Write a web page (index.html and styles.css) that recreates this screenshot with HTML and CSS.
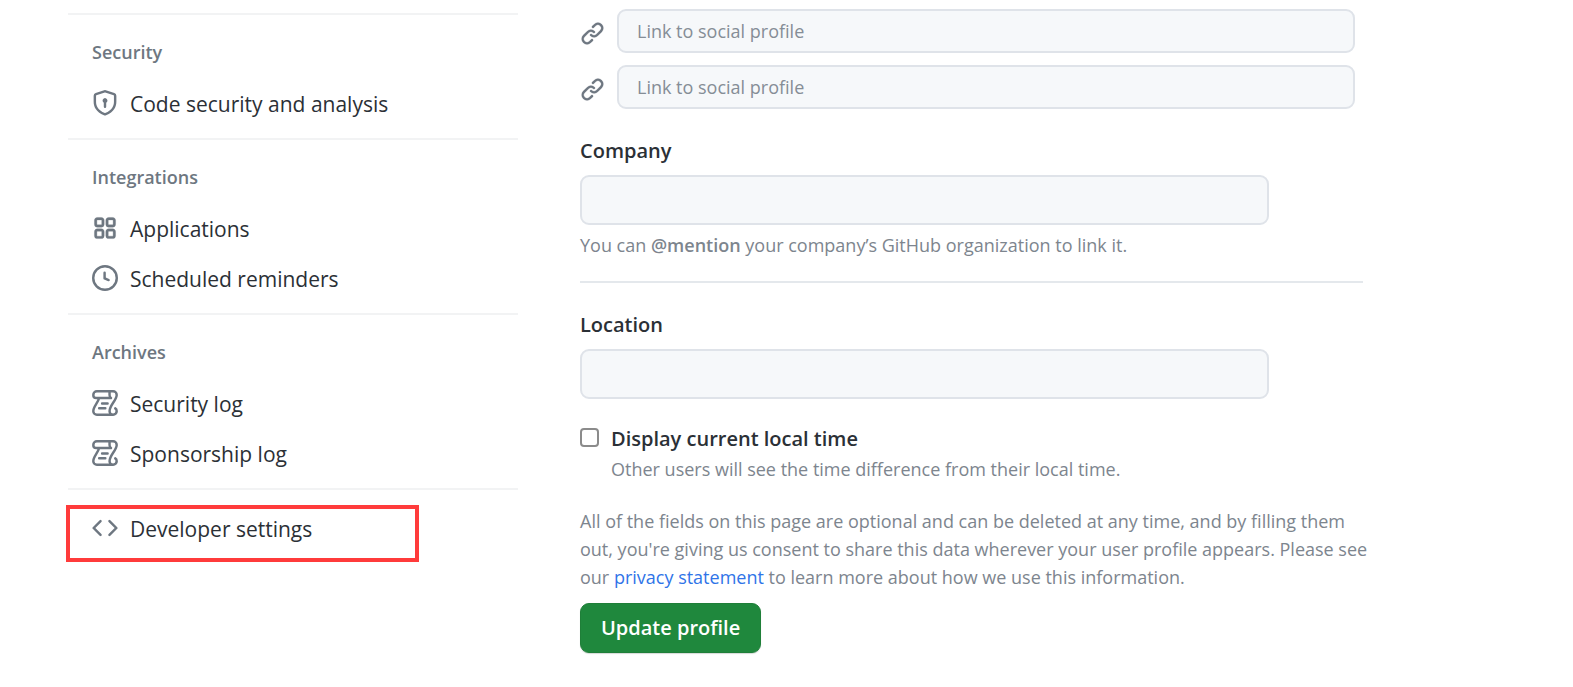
FILE: index.html
```html
<!DOCTYPE html>
<html lang="en">
<head>
<meta charset="utf-8">
<meta name="viewport" content="width=device-width, initial-scale=1">
<title>Your profile</title>
<link rel="stylesheet" href="styles.css">
</head>
<body>
<svg class="sprite" aria-hidden="true">
  <symbol id="shield" viewBox="0 0 16 16"><path d="m8.533.133 5.25 1.68A1.75 1.75 0 0 1 15 3.48V7c0 1.566-.32 3.182-1.303 4.682-.983 1.498-2.585 2.813-5.032 3.855a1.697 1.697 0 0 1-1.33 0c-2.447-1.042-4.049-2.357-5.032-3.855C1.32 10.182 1 8.566 1 7V3.48a1.75 1.75 0 0 1 1.217-1.667l5.25-1.68a1.748 1.748 0 0 1 1.066 0Zm-.61 1.429.001.001-5.25 1.68a.251.251 0 0 0-.174.237V7c0 1.36.275 2.666 1.057 3.859.784 1.194 2.121 2.342 4.366 3.298a.196.196 0 0 0 .154 0c2.245-.957 3.582-2.103 4.366-3.297C13.225 9.666 13.5 8.358 13.5 7V3.48a.25.25 0 0 0-.174-.238l-5.25-1.68a.25.25 0 0 0-.153 0ZM9.5 6.5c0 .536-.286 1.032-.75 1.3v2.45a.75.75 0 0 1-1.5 0V7.8A1.5 1.5 0 1 1 9.5 6.5Z"/></symbol>
  <symbol id="apps" viewBox="0 0 16 16"><path stroke="#6e7781" stroke-width=".2" d="M1.5 3.25c0-.966.784-1.75 1.75-1.75h2.5c.966 0 1.75.784 1.75 1.75v2.5A1.75 1.75 0 0 1 5.75 7.5h-2.5A1.75 1.75 0 0 1 1.5 5.75Zm7 0c0-.966.784-1.75 1.75-1.75h2.5c.966 0 1.75.784 1.75 1.75v2.5a1.75 1.75 0 0 1-1.75 1.75h-2.5A1.75 1.75 0 0 1 8.5 5.75Zm-7 7c0-.966.784-1.75 1.75-1.75h2.5c.966 0 1.75.784 1.75 1.75v2.5a1.75 1.75 0 0 1-1.75 1.75h-2.5a1.75 1.75 0 0 1-1.75-1.75Zm7 0c0-.966.784-1.75 1.75-1.75h2.5c.966 0 1.75.784 1.75 1.75v2.5a1.75 1.75 0 0 1-1.75 1.75h-2.5a1.75 1.75 0 0 1-1.75-1.75ZM3.25 3a.25.25 0 0 0-.25.25v2.5c0 .138.112.25.25.25h2.5A.25.25 0 0 0 6 5.75v-2.5A.25.25 0 0 0 5.75 3Zm7 0a.25.25 0 0 0-.25.25v2.5c0 .138.112.25.25.25h2.5a.25.25 0 0 0 .25-.25v-2.5a.25.25 0 0 0-.25-.25Zm-7 7a.25.25 0 0 0-.25.25v2.5c0 .138.112.25.25.25h2.5a.25.25 0 0 0 .25-.25v-2.5a.25.25 0 0 0-.25-.25Zm7 0a.25.25 0 0 0-.25.25v2.5c0 .138.112.25.25.25h2.5a.25.25 0 0 0 .25-.25v-2.5a.25.25 0 0 0-.25-.25Z"/></symbol>
  <symbol id="clock" viewBox="0 0 16 16"><path d="M8 0a8 8 0 1 1 0 16A8 8 0 0 1 8 0ZM1.5 8a6.5 6.5 0 1 0 13 0 6.5 6.5 0 0 0-13 0Zm7-3.25v2.992l2.028.812a.75.75 0 0 1-.557 1.392l-2.5-1A.751.751 0 0 1 7 8.25v-3.5a.75.75 0 0 1 1.5 0Z"/></symbol>
  <symbol id="log" viewBox="0 0 16 16"><g fill="none" stroke="#6e7781" stroke-width="1.5" stroke-linecap="round" stroke-linejoin="round"><path d="M13 15.2H3A2.2 2.2 0 0 1 .8 13C.8 10.3 3.6 8 4.4 4.9M11.6 4.9H2.6C1.3 4.9.8 4.1.8 3A2.2 2.2 0 0 1 3 .8h10A2.2 2.2 0 0 1 15.2 3c0 3.1-4.4 6.5-4.4 10a2.2 2.2 0 0 0 4.4 0c0-.8-.3-1.300-.9-1.700M10.800.9V3c0 .9.300 1.500.9 1.900"/><path d="M6.200 8.250h3.400M4.400 11.250h3.800"/></g></symbol>
  <symbol id="code" viewBox="0 0 16 16"><path d="m11.28 3.22 4.25 4.25a.75.75 0 0 1 0 1.06l-4.25 4.25a.749.749 0 0 1-1.275-.326.749.749 0 0 1 .215-.734L13.94 8l-3.72-3.72a.749.749 0 0 1 .326-1.275.749.749 0 0 1 .734.215Zm-6.56 0a.751.751 0 0 1 1.042.018.751.751 0 0 1 .018 1.042L2.06 8l3.72 3.72a.749.749 0 0 1-.326 1.275.749.749 0 0 1-.734-.215L.47 8.53a.75.75 0 0 1 0-1.06Z"/></symbol>
  <symbol id="link" viewBox="0 0 16 16"><path stroke="#6e7781" stroke-width=".1" d="m7.775 3.275 1.25-1.25a3.5 3.5 0 1 1 4.95 4.95l-2.5 2.5a3.5 3.5 0 0 1-4.95 0 .751.751 0 0 1 .018-1.042.751.751 0 0 1 1.042-.018 1.998 1.998 0 0 0 2.83 0l2.5-2.5a2.002 2.002 0 0 0-2.83-2.83l-1.25 1.25a.751.751 0 0 1-1.042-.018.751.751 0 0 1-.018-1.042Zm-4.69 9.64a1.998 1.998 0 0 0 2.83 0l1.25-1.25a.751.751 0 0 1 1.042.018.751.751 0 0 1 .018 1.042l-1.25 1.25a3.5 3.5 0 1 1-4.95-4.95l2.5-2.5a3.5 3.5 0 0 1 4.95 0 .751.751 0 0 1-.018 1.042.751.751 0 0 1-1.042.018 1.998 1.998 0 0 0-2.83 0l-2.5 2.5a1.998 1.998 0 0 0 0 2.83Z"/></symbol>
</svg>
<div class="page">
  <nav class="sidebar" aria-label="Settings">
    <section class="group">
      <h2 class="group-title">Security</h2>
      <a class="nav-item" href="#"><svg class="icon"><use href="#shield"/></svg><span>Code security and analysis</span></a>
    </section>
    <section class="group">
      <h2 class="group-title">Integrations</h2>
      <a class="nav-item" href="#"><svg class="icon"><use href="#apps"/></svg><span>Applications</span></a>
      <a class="nav-item" href="#"><svg class="icon"><use href="#clock"/></svg><span>Scheduled reminders</span></a>
    </section>
    <section class="group">
      <h2 class="group-title">Archives</h2>
      <a class="nav-item" href="#"><svg class="icon"><use href="#log"/></svg><span>Security log</span></a>
      <a class="nav-item" href="#"><svg class="icon"><use href="#log"/></svg><span>Sponsorship log</span></a>
    </section>
    <section class="group">
      <a class="nav-item highlighted" href="#"><svg class="icon"><use href="#code"/></svg><span>Developer settings</span></a>
    </section>
  </nav>
  <main class="content">
    <form class="profile">
      <div class="social">
        <div class="social-row"><svg class="icon link-icon"><use href="#link"/></svg><input class="field small" type="text" aria-label="Social profile 3" placeholder="Link to social profile"></div>
        <div class="social-row"><svg class="icon link-icon"><use href="#link"/></svg><input class="field small" type="text" aria-label="Social profile 4" placeholder="Link to social profile"></div>
      </div>
      <div class="form-group">
        <label class="label" for="company">Company</label>
        <input class="field" id="company" type="text">
        <p class="note">You can <strong>@mention</strong> your company’s GitHub organization to link it.</p>
      </div>
      <hr class="rule">
      <div class="form-group">
        <label class="label" for="location">Location</label>
        <input class="field" id="location" type="text">
      </div>
      <div class="check">
        <input class="checkbox" id="local-time" type="checkbox" aria-describedby="local-time-note">
        <div>
          <label class="label" for="local-time">Display current local time</label>
          <p class="check-note" id="local-time-note">Other users will see the time difference from their local time.</p>
        </div>
      </div>
      <p class="consent">All of the fields on this page are optional and can be deleted at any time, and by filling them out, you're giving us consent to share this data wherever your user profile appears. Please see our <a class="text-link" href="#">privacy statement</a> to learn more about how we use this information.</p>
      <button class="submit" type="button">Update profile</button>
    </form>
  </main>
</div>
</body>
</html>
```
FILE: styles.css
```css
* { box-sizing: border-box; }

body {
  margin: 0;
  background: #fff;
  color: #2b3036;
  font-family: "Open Sans", "Noto Sans", sans-serif;
  font-size: 21px;
  line-height: 32px;
}

p, h2 { margin: 0; }

.sprite { display: none; }

.page {
  display: grid;
  grid-template-columns: 450px minmax(0, 1fr);
  column-gap: 62px;
  padding: 0 210px 32px 68px;
}

.sidebar { padding-top: 13px; }

.group {
  border-top: 2px solid #f2f3f4;
  padding: 14px 0 9px;
}

.group-title {
  padding: 7px 24px 11px;
  color: #6e7781;
  font-size: 18px;
  font-weight: 600;
}

.nav-item {
  display: flex;
  align-items: center;
  gap: 12px;
  height: 50px;
  padding: 0 24px;
  color: inherit;
  text-decoration: none;
}

.icon {
  flex: none;
  width: 26px;
  height: 26px;
  margin-bottom: 2px;
  fill: #6e7781;
}

.highlighted { position: relative; }

.highlighted::after {
  content: "";
  position: absolute;
  inset: 1px 99px -8px -2px;
  border: 4px solid #ff3b3b;
}

.content { padding-top: 9px; }

.social {
  display: grid;
  gap: 12px;
  padding-right: 8px;
}

.social-row {
  display: flex;
  align-items: center;
  gap: 12px;
}

.link-icon {
  width: 25px;
  height: 25px;
  margin: 4px 0 0;
}

.field {
  display: block;
  width: 88%;
  height: 50px;
  padding: 0 19px;
  border: 2px solid #dfe3e9;
  border-radius: 9px;
  background: #f6f8fa;
  color: #24292f;
  font: inherit;
}

.field.small {
  flex: 1;
  height: 44px;
  padding: 0 18px;
  font-size: 18px;
}

.field::placeholder { color: #858d96; opacity: 1; }

.form-group { padding-top: 26px; }

.label {
  display: block;
  font-size: 20px;
  font-weight: 600;
}

.form-group .label { padding-bottom: 8px; }

.note {
  padding-top: 4px;
  color: #7d858e;
  font-size: 18px;
}

.note strong { font-weight: 600; }

.rule {
  height: 2px;
  margin: 20px 0 0;
  border: 0;
  background: #e4e8ec;
}

.check {
  display: flex;
  gap: 12px;
  padding-top: 24px;
}

.checkbox {
  flex: none;
  width: 19px;
  height: 19px;
  margin: 5px 0 0;
  appearance: none;
  border: 2px solid #8b8b8b;
  border-radius: 4px;
  background: #fff;
}

.checkbox:checked { background: #0969da; }

.check-note,
.consent {
  color: #7d858e;
  font-size: 18px;
  line-height: 28px;
}

.consent {
  margin-right: -16px;
  padding-top: 24px;
}

.text-link { color: #2f74e8; text-decoration: none; }

.submit {
  height: 50px;
  margin-top: 12px;
  padding: 0 20px;
  border: 1px solid #1f7f39;
  border-radius: 9px;
  background: #1f883d;
  box-shadow: 0 1px 1px #d5dad7;
  color: #fff;
  font: inherit;
  font-size: 20px;
  font-weight: 600;
}
```
